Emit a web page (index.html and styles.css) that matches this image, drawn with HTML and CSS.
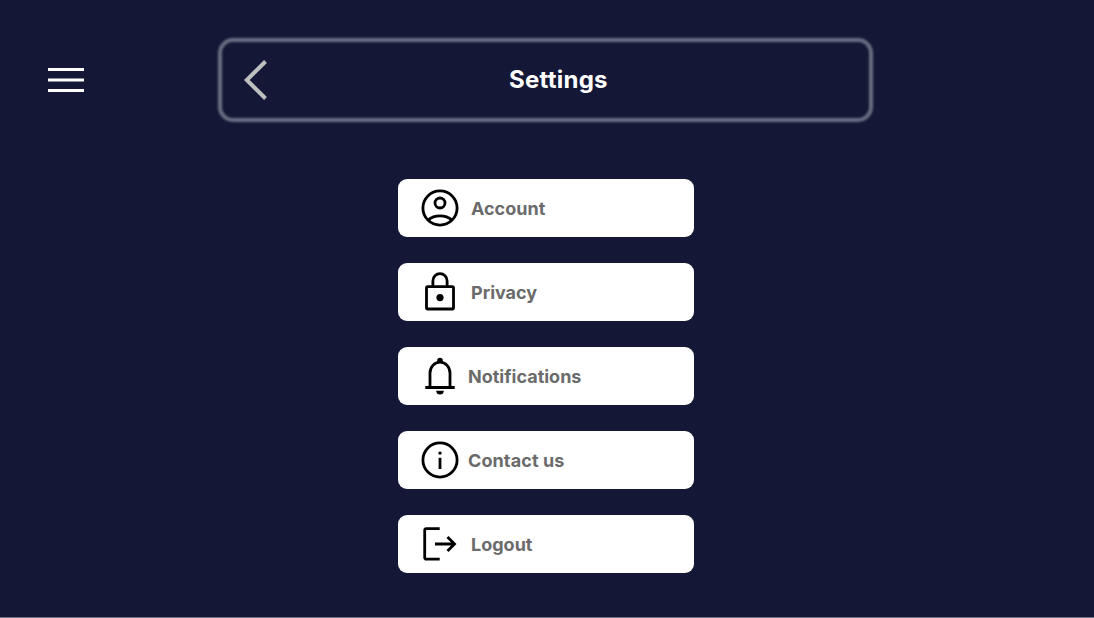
FILE: index.html
```html
<!DOCTYPE html>
<html lang="en">
<head>
<meta charset="utf-8">
<title>Settings</title>
<link rel="stylesheet" href="styles.css">
</head>
<body>
<div class="page">
  <header class="header">
    <button class="menu" aria-label="Menu">
      <svg width="36" height="24" viewBox="0 0 36 24"><path class="bars" d="M0 1.5H36M0 12H36M0 22.5H36"/></svg>
    </button>
    <div class="title-bar">
      <svg class="back" width="26" height="42" viewBox="0 0 26 42"><path d="M23.5 2.5L4.8 21L23.5 39.5"/></svg>
      <h1 class="title">Settings</h1>
    </div>
  </header>
  <nav class="list">
    <a class="item">
      <svg class="icon" viewBox="0 0 48 48"><circle cx="24" cy="24" r="17.1"/><circle cx="24" cy="19" r="5"/><path d="M12 36C18.5 30.5 29.5 30.5 36 36"/></svg>
      <span class="label">Account</span>
    </a>
    <a class="item">
      <svg class="icon" viewBox="0 0 48 48"><rect x="10.5" y="18.7" width="27" height="22.3" rx="1.2"/><path d="M16.9 18.5V12.8a7.1 7.1 0 0 1 14.2 0V18.5"/><circle class="solid" cx="24" cy="29.6" r="3.6"/></svg>
      <span class="label">Privacy</span>
    </a>
    <a class="item">
      <svg class="icon" viewBox="0 0 48 48"><path d="M9.3 35.5H38.7M14 35.5V21a10 10.8 0 0 1 20 0V35.5"/><path class="solid" d="M21.2 11V8.6a2.8 2.8 0 0 1 5.6 0V11ZM20.2 38.8h7.6a3.8 3.6 0 0 1-7.6 0Z"/></svg>
      <span class="label label-near">Notifications</span>
    </a>
    <a class="item">
      <svg class="icon" viewBox="0 0 48 48"><circle cx="24" cy="24" r="17.1"/><circle class="solid" cx="24" cy="17.1" r="1.7"/><path d="M24 21.8V33"/></svg>
      <span class="label label-near label-wide">Contact us</span>
    </a>
    <a class="item">
      <svg class="icon" viewBox="0 0 48 48"><path d="M23.7 8.7H10.3a1.6 1.6 0 0 0-1.6 1.6V37.6a1.6 1.6 0 0 0 1.6 1.6H23.7M19 24H39M31.5 17L38.5 24L31.5 31"/></svg>
      <span class="label">Logout</span>
    </a>
  </nav>
</div>
</body>
</html>
```
FILE: styles.css
```css
* {
  box-sizing: border-box;
}

body {
  margin: 0;
  font-family: Inter, "Liberation Sans", sans-serif;
}

.page {
  height: 618px;
  overflow: hidden;
  background: #141836;
  border-bottom: 1px solid #72748a;
}

.header {
  display: flex;
  align-items: center;
  gap: 134px;
  padding: 37px 0 0 48px;
}

.menu {
  display: flex;
  padding: 0;
  border: 0;
  background: none;
}

.bars {
  stroke: #fff;
  stroke-width: 3;
}

.title-bar {
  position: relative;
  display: flex;
  align-items: center;
  width: 656px;
  height: 86px;
  padding-left: 24px;
}

.title-bar::before {
  content: "";
  position: absolute;
  inset: 1px 1px 1px 0;
  border: 4px solid #6a6e83;
  border-radius: 15px;
  filter: blur(1.1px);
}

.back {
  fill: none;
  stroke: #bfbfbf;
  stroke-width: 4;
}

.title {
  margin: 0 0 0 241px;
  color: #fff;
  font-size: 24px;
  line-height: 30px;
  font-weight: 700;
  letter-spacing: 0.25px;
}

.list {
  display: flex;
  flex-direction: column;
  gap: 26px;
  width: 296px;
  margin: 56px 0 0 398px;
}

.item {
  display: flex;
  align-items: center;
  height: 58px;
  padding-left: 18px;
  border-radius: 9px;
  background: #fff;
}

.icon {
  width: 48px;
  height: 48px;
  fill: none;
  stroke: #000;
  stroke-width: 2.8;
}

.icon .solid {
  fill: #000;
  stroke: none;
}

.label {
  margin-left: 7px;
  padding-top: 2px;
  color: #6b6b6b;
  font-size: 18px;
  line-height: 22px;
  font-weight: 700;
}

.label-near {
  margin-left: 4px;
}

.label-wide {
  letter-spacing: 0.1px;
}
```
